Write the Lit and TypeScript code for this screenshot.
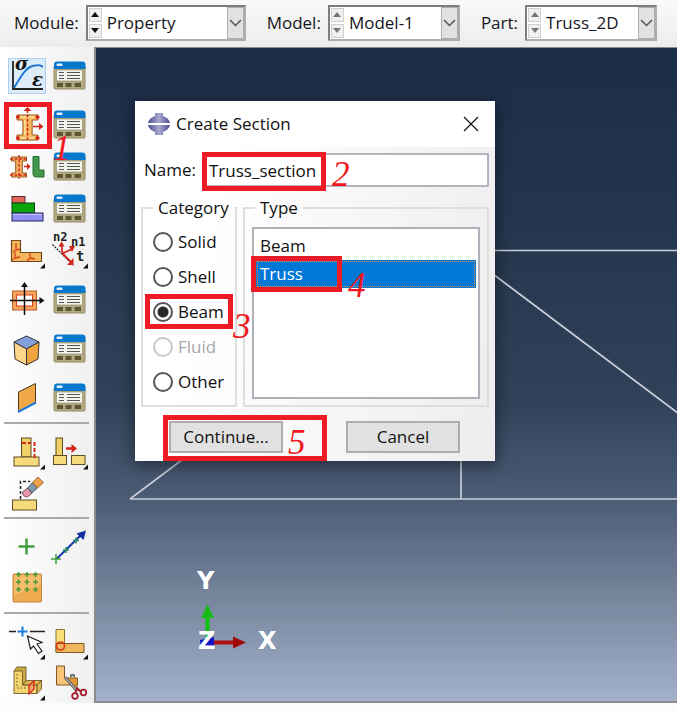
import { LitElement, html, svg, css, nothing, TemplateResult, SVGTemplateResult } from "lit";
import { customElement, property } from "lit/decorators.js";
import { classMap } from "lit/directives/class-map.js";

const flyout = svg`<path d="M37 30.500V35.500H32Z" fill="#111"/>`;

const manager = svg`
  <rect x="3" y="8" width="31" height="23" rx="1" fill="#b3aa82" stroke="#958c66"/>
  <path d="M3 11V6.500Q3 3.500 6 3.500H31Q34.500 3.500 34.500 6.500V11Z" fill="#0878cf"/>
  <rect x="5.500" y="5.500" width="6" height="2.500" rx="1" fill="#dff1ff"/>
  <rect x="5.500" y="12" width="26" height="11" fill="#f4f4ee" stroke="#8b8460" stroke-width=".6"/>
  <path d="M8 14.500h5M8 17.500h5M8 20.500h5M16 14.500h13M16 17.500h13M16 20.500h13" stroke="#555" stroke-width="1.200"/>
  <path d="M6 25h6v4H6zM14.500 25h6v4h-6zM23.500 25h6.500v4h-6.500z" fill="#5d5633"/>`;

const beamPath = (x: number, y: number, w: number, h: number, t: number) => {
  const a = x + w * 0.28;
  const b = x + w * 0.72;
  return `M${x} ${y}H${x + w}V${y + t}H${b}V${y + h - t}H${x + w}V${y + h}H${x}V${y + h - t}H${a}V${y + t}H${x}Z`;
};

const plus = (x: number, y: number, r: number, w: number, color: string) =>
  svg`<path d=${`M${x - r} ${y}h${2 * r}M${x} ${y - r}v${2 * r}`} stroke=${color} stroke-width=${w} fill="none"/>`;

const icons: Record<string, SVGTemplateResult> = {
  manager,
  material: svg`
    <path d="M5 3V31H35" fill="none" stroke="#222" stroke-width="1.800"/>
    <path d="M6 30C13 18 19 7 28 7.500Q32 6.500 35 9" fill="none" stroke="#1572d0" stroke-width="1.800"/>
    <text x="7" y="12" class="greek">σ</text><text x="24" y="28" class="greek">ε</text>`,
  section: svg`
    <path d=${beamPath(9, 8, 21, 25, 5)} fill="#f5b95f" stroke="#9b5a1c"/>
    <path d="M12 10H27M17 13V28M12 31H27" stroke="#fde3a4" stroke-width="1.500"/>
    <path d="M19.500 3V34" stroke="#d5261a" stroke-width="1.500" stroke-dasharray="3 1.500"/>
    <path d="M25 19.500h7" stroke="#d5261a" stroke-width="1.500"/>
    <path d="M15.500 4l4-4 4 4zM31 16l4.500 3.500L31 23zM7.500 10l2.500-2.500L12 10l-2 2.500zM27 10l2.500-2.500L32 10l-2.500 2.500zM7.500 31l2.500-2.500L12 31l-2 2.500zM27 31l2.500-2.500L32 31l-2.500 2.500z" fill="#d5261a"/>`,
  assign: svg`
    <path d=${beamPath(3.5, 8, 15, 20, 4)} fill="#f0b163" stroke="#9b5a1c"/>
    <path d="M11 6V30M2 10H20M2 26H20" stroke="#d5261a" stroke-width="1.300" stroke-dasharray="3 1.500"/>
    <path d="M16 17.500h4" stroke="#d5261a" stroke-width="1.500"/><path d="M19 14l3.500 3.500L19 21z" fill="#d5261a"/>
    <path d="M25 7.500h6V21h5v7H28q-3 0-3-3z" fill="#42984a" stroke="#246b30"/>`,
  layup: svg`
    <rect x="4" y="5.500" width="13" height="6.500" fill="#e4675c" stroke="#5d2a2a"/>
    <rect x="4" y="12" width="22.500" height="10" fill="#0aa50a" stroke="#123f12"/>
    <rect x="4" y="22" width="31" height="8" fill="#9191f2" stroke="#25255c"/>
    <path d="M5 23.500H34" stroke="#c6c6ff"/>`,
  orientation: svg`
    <path d="M3.500 7.500h9V19.500H33.500V28.500H3.500z" fill="#f5b75c" stroke="#6e4a1d" stroke-width="1.200"/>
    <path d="M8 10v7l-3 2M8 17l4-1M7 19v6l-3 2M7 25l5-1M22 20v5l-3 3M22 25l5 1" fill="none" stroke="#d5421a" stroke-width="1.300"/>${flyout}`,
  normals: svg`
    <text x="2" y="8" class="tag">n2</text><text x="20" y="13" class="tag">n1</text><text x="25" y="28" class="tag big">t</text>
    <path d="M1.500 11.500L23 33" stroke="#222" stroke-width="1.200" stroke-dasharray="2 1"/>
    <path d="M11.500 20.500L10.500 12M11.500 20.500L20 16.500M11.500 20.500L20 29" stroke="#cf2418" stroke-width="1.800"/>
    <path d="M7.500 13.500l3-5 3 5zM18 13l6 0-3 6zM22.500 25v7h-6.500z" fill="#cf2418"/>${flyout}`,
  profile: svg`
    <rect x="4.500" y="9" width="24" height="19" fill="#f6a45c" stroke="#b8602a"/>
    <rect x="8.500" y="13" width="16" height="11" fill="#fff" stroke="#d5421a"/>
    <path d="M16.500 4V33M2 18.500H33" stroke="#111" stroke-width="1.500"/>
    <path d="M13 5l3.500-5L20 5zM31.500 15l5 3.500-5 3.500z" fill="#111"/>`,
  solid: svg`
    <path d="M18.500 5L31 11 18.500 18 6 11z" fill="#84a0dc" stroke="#333"/>
    <path d="M6 11L18.500 18V34L7 28z" fill="#ffd48b" stroke="#333"/>
    <path d="M31 11L18.500 18V34L30 28z" fill="#eea53d" stroke="#333"/>`,
  skin: svg`
    <path d="M10.500 12L27.500 3.500V22.500L10.500 31.500z" fill="#efa845" stroke="#4a3a22"/>
    <path d="M10 32L28 22.500" stroke="#1f7be0" stroke-width="2"/>`,
  extend: svg`
    <rect x="13.500" y="4" width="9.500" height="19" fill="#efcf68" stroke="#5c4c22"/>
    <rect x="6" y="23" width="25" height="9" fill="#f5d97a" stroke="#5c4c22"/>
    <path d="M14 9H23M26.500 8V24" stroke="#d5261a" stroke-width="2" stroke-dasharray="4 2"/>${flyout}`,
  move: svg`
    <rect x="5" y="4" width="6.500" height="17.500" fill="#efcf68" stroke="#5c4c22"/>
    <rect x="2.500" y="21.500" width="13" height="9" fill="#f5d97a" stroke="#5c4c22"/>
    <rect x="20.500" y="21.500" width="13.500" height="9" fill="#f5d97a" stroke="#5c4c22"/>
    <path d="M15 14.500H22" stroke="#d5261a" stroke-width="2.500"/><path d="M20.500 10l5.500 4.500-5.500 4.500z" fill="#d5261a"/>${flyout}`,
  erase: svg`
    <rect x="4.500" y="25" width="24" height="10" fill="#f5d97a" stroke="#5c4c22"/>
    <path d="M12.500 24V6.500H22" fill="none" stroke="#222" stroke-width="1.500" stroke-dasharray="3 2"/>
    <path d="M14.500 17l5-4 4.500 5-4.500 4q-5 0-5-5z" fill="#e895a9" stroke="#5a3a42" stroke-width=".8"/>
    <path d="M19.500 13l5-5.500 5 5.500-5.500 5z" fill="#7f98a8" stroke="#3a4a55" stroke-width=".8"/>
    <path d="M24.500 7.500L30 2l5.500 5.500-6 5.500z" fill="#efa04a" stroke="#8a5520" stroke-width=".8"/>`,
  point: plus(18.5, 17.5, 8, 2.5, "#3f9f3f"),
  axis: svg`
    <path d="M5.500 30L30 6" stroke="#1738a8" stroke-width="2"/>
    <path d="M35 1.500l-2.500 9.500-7-6.500z" fill="#1030a0"/>
    ${plus(5, 30, 5, 1.5, "#3f9f3f")}${plus(15, 21, 3, 1.5, "#2f8f5f")}${plus(25, 11.5, 3, 1.5, "#2f8f5f")}`,
  grid: svg`
    <rect x="5" y="4" width="28.500" height="28" rx="1" fill="#efab50" stroke="#bd8440"/>
    <path d="M6 5H33V15L6 25z" fill="#f8c87e" opacity=".6"/>
    ${[4.5, 12, 19.5].map((y) => [10.5, 19, 27.5].map((x) => plus(x, y, 2.5, 1.5, "#479a35")))}`,
  pick: svg`
    <path d="M1 7.500h7M22 7.500h15" stroke="#222" stroke-width="1.500"/>${plus(14.5, 7.5, 5, 2, "#1f7be0")}
    <path d="M19.500 12l3 13 3-3 5 7.500 3.500-2.500-5-7 5-1.500z" fill="#fff" stroke="#222" stroke-width="1.200"/>${flyout}`,
  joint: svg`
    <path d="M5 5.500h8.500V28H5z" fill="#f8df77" stroke="#8a7430"/>
    <path d="M5 19.500H33V28.500H5z" fill="#efb860" stroke="#7c5a28"/>
    <circle cx="9.500" cy="22" r="4" fill="none" stroke="#dd3d18" stroke-width="1.700"/>${flyout}`,
  feature: svg`
    <path d="M6 6l3-4h9V17l-4 3z" fill="#cda948" stroke="#5c4c22" stroke-width=".8"/>
    <path d="M6 6h8.500V20H29V28.500H6z" fill="#f3d46e" stroke="#5c4c22" stroke-width=".8"/>
    <path d="M14.500 20l4-4.500H33.500L29 20zM29 20l4.500-4.500V24L29 28.500z" fill="#e0b653" stroke="#5c4c22" stroke-width=".8"/>
    <path d="M9 9v14M9 23h10" stroke="#5c4c22" stroke-dasharray="1.500 2"/>
    <path d="M21 20l5-4v8l-5 5z" fill="#f08a5a" fill-opacity=".6" stroke="#d5261a" stroke-width="1.300"/>${flyout}`,
  cut: svg`
    <path d="M5.500 1h8V13L20 20H5.500z" fill="#f8c676" stroke="#7c5a28"/>
    <path d="M16 13H26.500V21H22z" fill="#e39a35" stroke="#7c5a28"/>
    <path d="M14 12l12 14" fill="none" stroke="#666" stroke-width="3"/>
    <path d="M14 12l12 14" fill="none" stroke="#ccc"/>
    <path d="M20 12v-2h3v2" fill="none" stroke="#555" stroke-width="1.500"/>
    <circle cx="24" cy="31" r="2.800" fill="none" stroke="#a51c2c" stroke-width="1.800"/>
    <circle cx="32.500" cy="27.500" r="2.800" fill="none" stroke="#a51c2c" stroke-width="1.800"/>
    <path d="M24.500 28l1.500-5 4 4" fill="none" stroke="#a51c2c" stroke-width="1.800"/>`,
};

interface Tool { icon: string; label: string; active?: boolean; marked?: boolean; step?: string }
type Row = Tool[];
const t = (icon: string, label: string, extra: Partial<Tool> = {}): Tool => ({ icon, label, ...extra });

/* sections are parted by rules, each holding clusters of rows */
const sections: Row[][][] = [
  [
    [[t("material", "Create Material", { active: true }), t("manager", "Material Manager")]],
    [
      [t("section", "Create Section", { marked: true }), t("manager", "Section Manager", { step: "1" })],
      [t("assign", "Assign Section"), t("manager", "Section Assignment Manager")],
      [t("layup", "Create Composite Layup"), t("manager", "Composite Layup Manager")],
      [t("orientation", "Assign Material Orientation"), t("normals", "Assign Beam Orientation")],
    ],
    [[t("profile", "Create Profile"), t("manager", "Profile Manager")]],
    [[t("solid", "Create Inertia"), t("manager", "Inertia Manager")]],
    [[t("skin", "Create Skin"), t("manager", "Skin Manager")]],
  ],
  [[[t("extend", "Extend"), t("move", "Move")], [t("erase", "Remove Faces")]]],
  [[[t("point", "Datum Point"), t("axis", "Datum Axis")], [t("grid", "Point Grid")]]],
  [[[t("pick", "Partition Edge"), t("joint", "Partition Face")], [t("feature", "Partition Cell"), t("cut", "Edit Geometry")]]],
];

const shared = css`
  * { box-sizing: border-box; }
  button, input, select { font: inherit; color: inherit; margin: 0; }
  .ring { position: absolute; border: 5px solid #ed1c24; pointer-events: none; z-index: 2; }
  .step {
    position: absolute; z-index: 3; pointer-events: none;
    font: italic 35px/36px "Liberation Serif", serif; color: #f01820;
  }
`;

@customElement("combo-box")
export class ComboBox extends LitElement {
  @property() label = "";
  @property() value = "";
  @property({ type: Boolean }) wide = false;
  @property({ type: Boolean }) muted = false;

  static styles = [shared, css`
    :host { display: flex; align-items: center; gap: 7px; }
    .combo {
      display: flex; height: 36px; width: 132px; background: #fff;
      border: 2px solid #adadad; border-top-color: #7d7d7d; border-left-color: #7d7d7d;
    }
    .wide { width: 160px; }
    .spin { display: flex; flex-direction: column; gap: 2px; padding: 1px; width: 15px; }
    .spin button {
      flex: 1; padding: 0; display: grid; place-items: center;
      background: #f0f0f0; border: 1px solid #d0d0d0; color: #111;
    }
    .muted button { color: #777; }
    .field { flex: 1; display: grid; min-width: 0; }
    .field > * { grid-area: 1 / 1; }
    select { appearance: none; border: 0; background: none; padding: 0 18px 0 4px; width: 100%; min-width: 0; }
    .drop {
      justify-self: end; width: 17px; background: #e1e1e1; border: 1px solid #adadad;
      pointer-events: none; display: grid; place-items: center;
    }
    svg { display: block; }
  `];

  render() {
    return html`
      <label for="c">${this.label}</label>
      <div class=${classMap({ combo: true, wide: this.wide })}>
        <div class=${classMap({ spin: true, muted: this.muted })}>
          <button aria-label="Previous"><svg width="8" height="5"><path d="M0 5L4 0 8 5z" fill="currentColor"/></svg></button>
          <button aria-label="Next"><svg width="8" height="5"><path d="M0 0L4 5 8 0z" fill="currentColor"/></svg></button>
        </div>
        <div class="field">
          <select id="c"><option>${this.value}</option></select>
          <span class="drop"><svg width="13" height="8"><path d="M1 1L6.500 6.500 12 1" fill="none" stroke="#555" stroke-width="1.500"/></svg></span>
        </div>
      </div>`;
  }
}

@customElement("tool-box")
export class ToolBox extends LitElement {
  static styles = [shared, css`
    :host { display: block; padding: 11px 5px 0 4px; background: linear-gradient(90deg, #fff, #efefef); }
    .section { display: flex; flex-direction: column; gap: 13px; padding: 0 0 6px 4px; }
    .section:last-child { padding-bottom: 0; }
    .section + .section { border-top: 2px solid #a9a9a9; padding-top: 10px; }
    .cluster { display: flex; flex-direction: column; gap: 6px; }
    .section + .section .cluster { gap: 5px; }
    .row { display: grid; grid-template-columns: 38px 38px; gap: 5px; }
    .tool { position: relative; height: 36px; }
    button { display: block; width: 38px; height: 36px; padding: 0; border: 0; background: none; }
    .active { background: #dcecf9; box-shadow: inset 0 0 0 1px #a9d0f2; }
    svg { display: block; overflow: visible; }
    .ring { inset: -5px -6px -6px -4px; }
    .step { left: 2px; top: 24px; }
    .greek { font: italic bold 18px "DejaVu Serif", serif; fill: #111; }
    .tag { font: bold 12px "DejaVu Sans Mono", monospace; fill: #222; }
    .big { font-size: 14px; }
  `];

  private tool(x: Tool): TemplateResult {
    return html`<div class="tool">
      <button class=${classMap({ active: !!x.active })} aria-label=${x.label}>
        <svg width="38" height="36" viewBox="0 0 38 36">${icons[x.icon]}</svg>
      </button>
      ${x.marked ? html`<span class="ring"></span>` : nothing}
      ${x.step ? html`<span class="step">${x.step}</span>` : nothing}
    </div>`;
  }

  render() {
    return sections.map((s) => html`<div class="section">${s.map((c) => html`
      <div class="cluster">${c.map((r) => html`<div class="row">${r.map((x) => this.tool(x))}</div>`)}</div>`)}</div>`);
  }
}

@customElement("section-dialog")
export class SectionDialog extends LitElement {
  static styles = [shared, css`
    :host { display: block; width: 360px; box-shadow: 0 3px 14px 2px rgba(0, 0, 0, .4); color: #111; }
    header { display: flex; align-items: center; gap: 6px; height: 46px; padding: 0 14px 0 13px; background: #fff; }
    h1 { flex: 1; margin: 0; font-size: 17px; font-weight: 400; }
    .close { padding: 0; border: 0; background: none; width: 20px; height: 20px; }
    svg { display: block; }
    form { display: flex; flex-direction: column; padding: 6px 6px 8px; background: linear-gradient(100deg, #fff 20%, #ededed); }
    .name { display: flex; align-items: center; gap: 8px; padding-left: 3px; height: 34px; }
    .box { position: relative; flex: 1; display: flex; }
    input[type="text"] { width: 100%; height: 34px; padding: 0 3px; background: #fff; border: 2px solid #b4b4be; outline: 0; }
    .groups { display: grid; grid-template-columns: 96px 1fr; gap: 6px; margin-top: 8px; }
    fieldset { position: relative; margin: 0; min-width: 0; height: 212px; border: 2px solid #dedede; padding: 6px 7px; }
    legend { line-height: 26px; margin-left: 3px; padding: 0 5px; white-space: nowrap; }
    .category { padding: 3px 0 0 10px; }
    .category legend { margin-left: 0; margin-right: -6px; }
    .option { position: relative; display: flex; align-items: center; gap: 5px; height: 35px; }
    .off { color: #a8a8a8; }
    input[type="radio"] {
      appearance: none; width: 20px; height: 20px; border: 2px solid #555; border-radius: 50%;
      background: #fff; flex: none;
    }
    input[type="radio"]:checked { background: radial-gradient(circle, #2a2a2a 5px, #fff 6px); }
    input[type="radio"]:disabled { border-color: #c8c8c8; }
    ul { margin: 0; padding: 3px 2px; list-style: none; height: 172px; background: #fff; border: 2px solid #b0b0ba; }
    li { position: relative; height: 28px; line-height: 28px; padding: 0 4px; }
    .selected { color: #fff; background: #0078d7; outline: 1px dotted #d8904a; outline-offset: -2px; }
    footer { display: flex; justify-content: space-between; padding: 14px 29px 0 28px; }
    .action { position: relative; }
    .action button { display: block; width: 114px; height: 32px; padding: 0; border: 2px solid #adadad; background: #e1e1e1; }
    .ring.n { inset: -1px auto -4px -2px; width: 124px; }
    .ring.r { inset: 0 auto 0 -8px; width: 88px; }
    .ring.l { inset: -4px auto -4px -5px; width: 91px; }
    .ring.a { inset: -6px auto -8px -6px; width: 164px; }
    .step.n { left: 128px; top: 4px; }
    .step.r { left: 80px; top: 15px; }
    .step.l { left: 92px; top: 8px; }
    .step.a { left: 119px; top: 4px; }
  `];

  private mark(kind: string, step: string) {
    return html`<span class="ring ${kind}"></span><span class="step ${kind}">${step}</span>`;
  }

  render() {
    return html`
      <header>
        <svg width="22" height="22" viewBox="0 0 22 22">
          <defs><linearGradient id="g"><stop stop-color="#4d4d8e"/><stop offset=".5" stop-color="#a9a9d4"/><stop offset="1" stop-color="#4d4d8e"/></linearGradient></defs>
          <path d="M7 0h8v3q6 2 7 7H0q1-5 7-7zM0 12h22q-1 5-7 7v3H7v-3q-6-2-7-7z" fill="url(#g)"/>
        </svg>
        <h1>Create Section</h1>
        <button class="close" aria-label="Close"><svg width="20" height="20"><path d="M3 3L17 17M17 3L3 17" stroke="#111" stroke-width="1.200"/></svg></button>
      </header>
      <form @submit=${(e: Event) => e.preventDefault()}>
        <div class="name">
          <label for="name">Name:</label>
          <div class="box"><input id="name" type="text" value="Truss_section">${this.mark("n", "2")}</div>
        </div>
        <div class="groups">
          <fieldset class="category">
            <legend>Category</legend>
            ${["Solid", "Shell", "Beam", "Fluid", "Other"].map((c) => html`
              <label class=${classMap({ option: true, off: c === "Fluid" })}>
                <input type="radio" name="category" ?checked=${c === "Beam"} ?disabled=${c === "Fluid"}>${c}
                ${c === "Beam" ? this.mark("r", "3") : nothing}
              </label>`)}
          </fieldset>
          <fieldset>
            <legend>Type</legend>
            <ul role="listbox" aria-label="Type">
              <li role="option" aria-selected="false">Beam</li>
              <li role="option" aria-selected="true" class="selected">Truss${this.mark("l", "4")}</li>
            </ul>
          </fieldset>
        </div>
        <footer>
          <div class="action"><button>Continue...</button>${this.mark("a", "5")}</div>
          <div class="action"><button type="button">Cancel</button></div>
        </footer>
      </form>`;
  }
}

@customElement("app-root")
export class AppRoot extends LitElement {
  static styles = [shared, css`
    :host {
      display: flex; flex-direction: column; min-height: 100vh; box-sizing: border-box; padding-bottom: 8px;
      font: 17px/24px "Open Sans", sans-serif; color: #151520; background: #fcfcfc;
    }
    nav { display: flex; gap: 21px; align-items: center; height: 47px; padding: 0 14px 2px; background: linear-gradient(#fafafa, #ececec); white-space: nowrap; }
    main { flex: 1; display: grid; grid-template-columns: 94px 1fr; }
    .view {
      position: relative; overflow: hidden; border: solid #8b8b8b; border-width: 1px 0 2px 2px;
      background: linear-gradient(#1a2c48, #26384f 31%, #304259 54%, #4b5c75 69%, #75859c 84%, #a3b2cb);
    }
    .scene { position: absolute; inset: 0; width: 100%; height: 100%; }
    .axis { font: bold 24px "DejaVu Sans", sans-serif; fill: #fff; }
    section-dialog { position: absolute; left: 39px; top: 53px; }
  `];

  render() {
    return html`
      <nav>
        <combo-box label="Module:" value="Property" wide></combo-box>
        <combo-box label="Model:" value="Model-1" muted></combo-box>
        <combo-box label="Part:" value="Truss_2D" muted></combo-box>
      </nav>
      <main>
        <tool-box></tool-box>
        <div class="view">
          <svg class="scene">
            <g stroke="#c9cdd8" stroke-width="1.700" fill="none">
              <path d="M34 451L365 202L1365 954M365 202V451"/>
              <line x1="365" y1="202.500" x2="100%" y2="202.500"/>
              <line x1="34" y1="451" x2="100%" y2="451"/>
            </g>
            <path d="M109.500 569h4V592h-4z" fill="#0cc40c"/><path d="M105 570l6.500-14 6.500 14z" fill="#18b818"/>
            <path d="M114 592.500H139v4H114z" fill="#b01010"/><path d="M137 588.500l13 6-13 6z" fill="#a00808"/>
            <path d="M104 592l14-3v12h-13z" fill="#1212c8"/>
            <text class="axis" x="101" y="541">Y</text>
            <text class="axis" x="102" y="601">Z</text>
            <text class="axis" x="162" y="601">X</text>
          </svg>
          <section-dialog></section-dialog>
        </div>
      </main>`;
  }
}
